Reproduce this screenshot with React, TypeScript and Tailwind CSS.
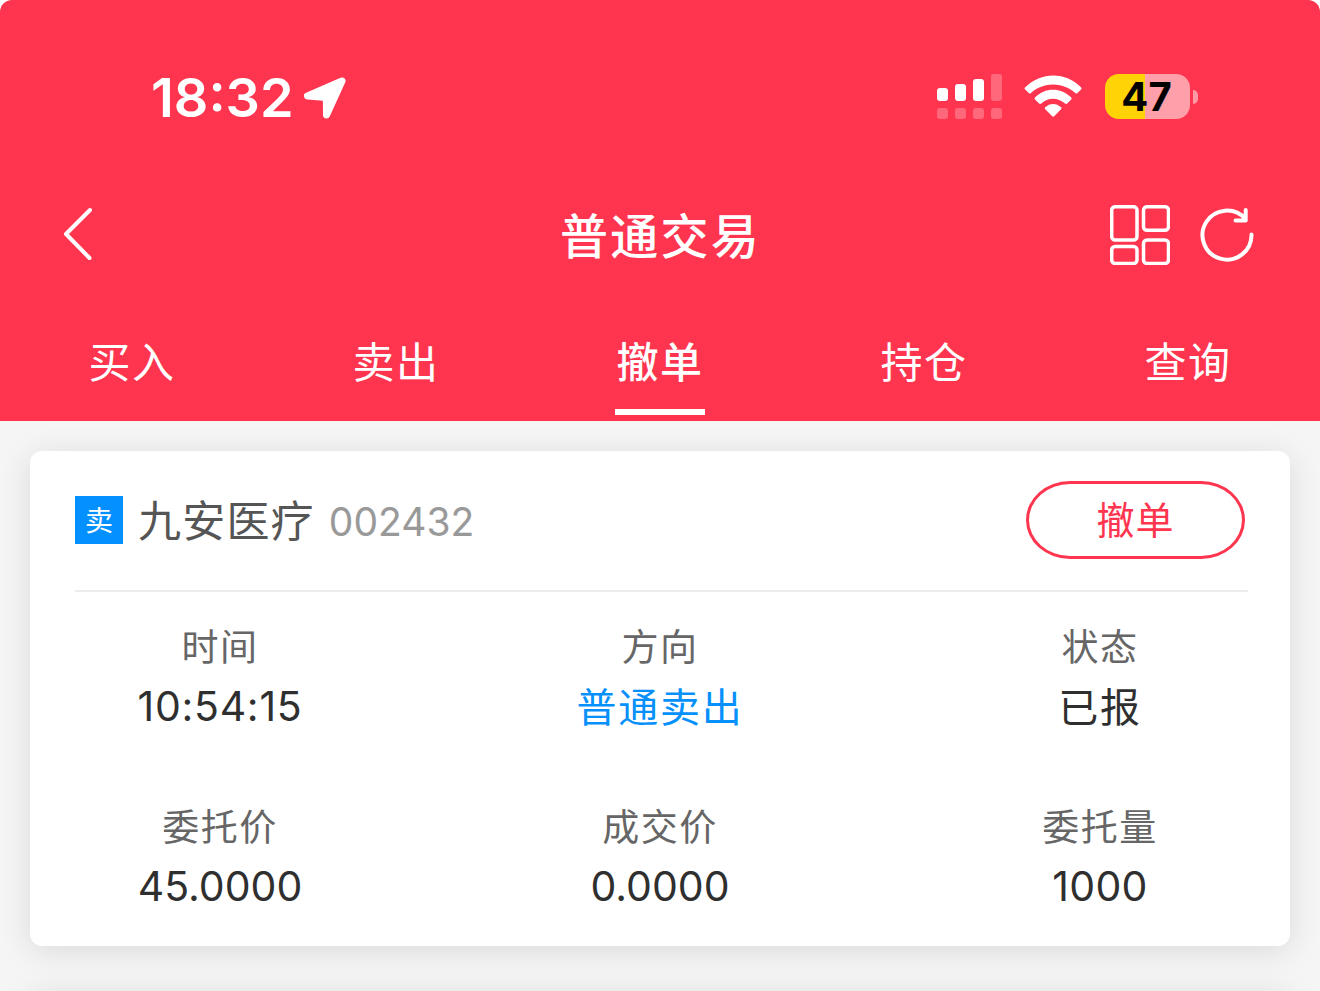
import React from "react";

const tabs = ["买入", "卖出", "撤单", "持仓", "查询"];

const fields = [
  { label: "时间", value: "10:54:15", cls: "text-[41px] tracking-[0.700px] text-[#2f2f2f]" },
  { label: "方向", value: "普通卖出", cls: "pt-[2px] text-[40px] tracking-[1.700px] text-[#0590fb]" },
  { label: "状态", value: "已报", cls: "pt-[2px] text-[40px] tracking-[1.700px] text-[#2f2f2f]" },
  { label: "委托价", value: "45.0000", cls: "text-[41px] text-[#2f2f2f]" },
  { label: "成交价", value: "0.0000", cls: "text-[41px] text-[#2f2f2f]" },
  { label: "委托量", value: "1000", cls: "text-[41px] tracking-[0.300px] text-[#2f2f2f]" },
];

function StatusBar() {
  return (
    <div className="flex h-[165px] items-start justify-between pr-[122px] pl-[151px] pt-[66px]">
      <div className="flex h-[64px] items-center">
        <span className="w-[153px] font-['Inter'] text-[54px] leading-[64px] font-semibold whitespace-nowrap">18:32</span>
        <svg width="42" height="43" viewBox="0 0 42 43" fill="currentColor" stroke="currentColor" strokeWidth="7" strokeLinejoin="round">
          <path d="M38 4 L3.500 19 L22.300 20.500 L22.500 38 Z" />
        </svg>
      </div>
      <div className="flex items-start pt-[8px]">
        <svg width="65" height="45" viewBox="0 0 65 45" fill="currentColor">
          <rect x="0" y="14" width="11" height="13" rx="3" />
          <rect x="18" y="10" width="11" height="17" rx="3" />
          <rect x="36" y="5" width="11" height="22" rx="3" />
          <g opacity=".25">
            <rect x="54" y="0" width="11" height="27" rx="3" />
            <rect x="0" y="34" width="11" height="11" rx="3" />
            <rect x="18" y="34" width="11" height="11" rx="3" />
            <rect x="36" y="34" width="11" height="11" rx="3" />
            <rect x="54" y="34" width="11" height="11" rx="3" />
          </g>
        </svg>
        <svg className="mt-px mr-px ml-[21px]" width="60" height="44" viewBox="0 0 60 44" fill="currentColor">
          <path d="M2 12.500 C18 -3.500 43 -3.500 58.200 12.500 Q59 13.500 58 14.500 L54.500 18 Q53.500 19 52.300 18 C39.500 6.500 20.500 6.500 7.900 18 Q6.700 19 5.700 18 L2.200 14.500 Q1 13.500 2 12.500 Z" />
          <path d="M12 22.600 C22 12.200 38 12.200 48.200 22.600 Q49.200 23.600 48.200 24.600 L44.200 28.500 Q43.200 29.400 42 28.500 C35 22 25 22 18.300 28.500 Q17.100 29.400 16.100 28.500 L12 24.600 Q11 23.600 12 22.600 Z" />
          <path d="M22.300 32.300 C26.500 27.800 33.700 27.800 38 32.300 Q38.900 33.300 38 34.300 L31.200 41.300 Q30.200 42.200 29.200 41.300 L22.300 34.300 Q21.400 33.300 22.300 32.300 Z" />
        </svg>
        <div className="ml-[21px] flex h-[45px] w-[85px] items-center justify-center rounded-[14px] bg-[linear-gradient(90deg,#ffd306_0_40px,#ff9fa9_40px)] pr-[2px] font-['Inter'] text-[40px] leading-[45px] font-bold text-black">
          <span>47</span>
        </div>
        <div className="mt-[16px] ml-[3px] h-[14px] w-[5px] rounded-r-[5px] bg-[#ff99a5]" />
      </div>
    </div>
  );
}

function NavBar() {
  return (
    <div className="flex h-[140px] items-center justify-between pr-[65px] pl-[62px]">
      <div className="flex w-[145px]">
        <svg width="32" height="58" viewBox="0 0 32 58" fill="none" stroke="currentColor" strokeWidth="4" strokeLinecap="round" strokeLinejoin="round">
          <path d="M28 4 L4 28 L27.500 52" />
        </svg>
      </div>
      <h1 className="pt-[4px] pl-[4px] text-[48px] leading-[60px] font-medium tracking-[2.300px]">普通交易</h1>
      <div className="flex w-[145px] items-center justify-between">
        <svg width="60" height="60" viewBox="0 0 60 60" fill="none" stroke="currentColor" strokeWidth="3.500">
          <rect x="1.700" y="1.700" width="25.300" height="33.300" rx="3.500" />
          <rect x="33.500" y="1.700" width="25" height="23.500" rx="3.500" />
          <rect x="1.700" y="41.500" width="25.300" height="17" rx="3.500" />
          <rect x="33.500" y="35" width="25" height="23.500" rx="3.500" />
        </svg>
        <svg width="55" height="58" viewBox="0 0 55 58" fill="none" stroke="currentColor" strokeWidth="4" strokeLinecap="round" strokeLinejoin="round">
          <path d="M51.500 28.500 A24.500 24.500 0 1 1 45.500 13 M45.700 4 V14.500 H35.500" />
        </svg>
      </div>
    </div>
  );
}

export default function App() {
  return (
    <div className="h-[991px] w-[1320px] overflow-hidden bg-white font-['Inter','Noto_Sans_CJK_SC',sans-serif]">
      <div className="h-full overflow-hidden rounded-t-[12px] bg-[#f5f5f5]">
        <header className="h-[421px] bg-[#ff354f] text-white">
          <StatusBar />
          <NavBar />
          <nav className="grid h-[116px] grid-cols-5">
            {tabs.map((t) => (
              <button
                key={t}
                className={
                  t === "撤单"
                    ? "flex flex-col items-center pt-[28px] text-[42px] leading-[60px] font-medium tracking-[1.500px]"
                    : "flex flex-col items-center pt-[28px] text-[42px] leading-[60px] font-normal tracking-[1.500px]"
                }
              >
                {t}
                {t === "撤单" && <span className="mt-[16px] h-[6px] w-[90px] bg-white" />}
              </button>
            ))}
          </nav>
        </header>
        <main className="flex flex-col gap-[45px] px-[30px] pt-[30px]">
          <section className="h-[495px] shrink-0 rounded-[12px] bg-white shadow-[0_5px_33px_rgba(0,0,0,0.11)]">
            <div className="mr-[42px] ml-[45px] flex h-[141px] items-center border-b-2 border-[#ececec] pr-[3px] pb-[2px]">
              <span className="flex h-[48px] w-[48px] items-center justify-center bg-[#0590ff] pt-[3px] text-[28px] leading-[45px] text-white">卖</span>
              <span className="ml-[15px] pt-[3px] text-[43px] leading-[60px] tracking-[1.200px] text-[#555]">九安医疗</span>
              <span className="ml-[14px] pt-[5px] text-[39px] leading-[60px] text-[#999]">002432</span>
              <button className="ml-auto h-[78px] w-[219px] rounded-[44px/39px] border-[3px] border-[#ff354f] text-[38px] leading-[72px] tracking-[1px] text-[#ff354f]">撤单</button>
            </div>
            <div className="-mx-[30px] grid grid-cols-3 pt-[26px]">
              {fields.map((f) => (
                <div key={f.label} className="flex h-[180px] flex-col items-center">
                  <span className="h-[58px] text-[37px] leading-[60px] tracking-[1.500px] text-[#666]">{f.label}</span>
                  <span className={`leading-[60px] ${f.cls}`}>{f.value}</span>
                </div>
              ))}
            </div>
          </section>
          <section className="h-[495px] shrink-0 rounded-[12px] bg-white shadow-[0_5px_33px_rgba(0,0,0,0.11)]" />
        </main>
      </div>
    </div>
  );
}
